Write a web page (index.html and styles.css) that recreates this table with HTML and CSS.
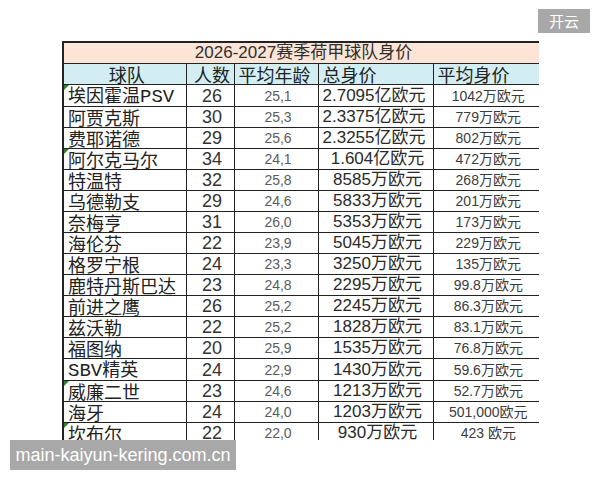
FILE: index.html
```html
<!DOCTYPE html>
<html lang="zh">
<head>
<meta charset="utf-8">
<link rel="stylesheet" href="styles.css">
</head>
<body>
<div class="page">
  <div class="badge">开云</div>
  <div class="sheet">
    <table class="grid">
      <colgroup>
        <col class="c-team"><col class="c-num"><col class="c-age"><col class="c-total"><col class="c-avg">
      </colgroup>
      <tr class="title-row"><td colspan="5">2026-2027赛季荷甲球队身价</td></tr>
      <tr class="head-row">
        <td class="center">球队</td><td class="center">人数</td><td class="left">平均年龄</td><td class="left">总身价</td><td class="left">平均身价</td>
      </tr>
      <tr><td class="team mark">埃因霍温<span class="lat">PSV</span></td><td class="num">26</td><td class="age">25,1</td><td class="total left">2.7095亿欧元</td><td class="avg">1042万欧元</td></tr>
      <tr><td class="team">阿贾克斯</td><td class="num">30</td><td class="age">25,3</td><td class="total left">2.3375亿欧元</td><td class="avg">779万欧元</td></tr>
      <tr><td class="team">费耶诺德</td><td class="num">29</td><td class="age">25,6</td><td class="total left">2.3255亿欧元</td><td class="avg">802万欧元</td></tr>
      <tr><td class="team mark">阿尔克马尔</td><td class="num">34</td><td class="age">24,1</td><td class="total">1.604亿欧元</td><td class="avg">472万欧元</td></tr>
      <tr><td class="team">特温特</td><td class="num">32</td><td class="age">25,8</td><td class="total">8585万欧元</td><td class="avg">268万欧元</td></tr>
      <tr><td class="team">乌德勒支</td><td class="num">29</td><td class="age">24,6</td><td class="total">5833万欧元</td><td class="avg">201万欧元</td></tr>
      <tr><td class="team">奈梅亨</td><td class="num">31</td><td class="age">26,0</td><td class="total">5353万欧元</td><td class="avg">173万欧元</td></tr>
      <tr><td class="team">海伦芬</td><td class="num">22</td><td class="age">23,9</td><td class="total">5045万欧元</td><td class="avg">229万欧元</td></tr>
      <tr><td class="team">格罗宁根</td><td class="num">24</td><td class="age">23,3</td><td class="total">3250万欧元</td><td class="avg">135万欧元</td></tr>
      <tr><td class="team">鹿特丹斯巴达</td><td class="num">23</td><td class="age">24,8</td><td class="total">2295万欧元</td><td class="avg">99.8万欧元</td></tr>
      <tr><td class="team">前进之鹰</td><td class="num">26</td><td class="age">25,2</td><td class="total">2245万欧元</td><td class="avg">86.3万欧元</td></tr>
      <tr><td class="team">兹沃勒</td><td class="num">22</td><td class="age">25,2</td><td class="total">1828万欧元</td><td class="avg">83.1万欧元</td></tr>
      <tr><td class="team">福图纳</td><td class="num">20</td><td class="age">25,9</td><td class="total">1535万欧元</td><td class="avg">76.8万欧元</td></tr>
      <tr><td class="team"><span class="lat">SBV</span>精英</td><td class="num">24</td><td class="age">22,9</td><td class="total">1430万欧元</td><td class="avg">59.6万欧元</td></tr>
      <tr><td class="team mark">威廉二世</td><td class="num">23</td><td class="age">24,6</td><td class="total">1213万欧元</td><td class="avg">52.7万欧元</td></tr>
      <tr><td class="team">海牙</td><td class="num">24</td><td class="age">24,0</td><td class="total">1203万欧元</td><td class="avg">501,000欧元</td></tr>
      <tr><td class="team mark">坎布尔</td><td class="num">22</td><td class="age">22,0</td><td class="total">930万欧元</td><td class="avg">423 欧元</td></tr>
    </table>
  </div>
  <div class="watermark">main-kaiyun-kering.com.cn</div>
</div>
</body>
</html>
```

FILE: styles.css
```css
html, body {
  margin: 0;
  padding: 0;
  background: #ffffff;
}

.page {
  position: relative;
  width: 600px;
  height: 480px;
  overflow: hidden;
  font-family: "Liberation Sans", "Noto Sans CJK SC", sans-serif;
}

.badge {
  position: absolute;
  top: 9px;
  left: 538px;
  width: 52px;
  height: 24px;
  background: #a8a8a8;
  color: #ffffff;
  font-family: "Noto Sans CJK SC", sans-serif;
  font-size: 15px;
  line-height: 24px;
  text-align: center;
}

.sheet {
  margin: 41px 0 0 62px;
  width: 477px;
  height: 399px;
  overflow: hidden;
}

.grid {
  border-collapse: collapse;
  table-layout: fixed;
  width: 477px;
  color: #222222;
}

.c-team { width: 123px; }
.c-num { width: 48px; }
.c-age { width: 84px; }
.c-total { width: 115px; }
.c-avg { width: 107px; }

.grid td {
  border: 1px solid #222222;
  padding: 0 0 0 4px;
  height: 20px;
  line-height: 18px;
  vertical-align: middle;
  white-space: nowrap;
  background: #ffffff;
}

.grid tr:first-child td { border-top: 2px solid #222; }
.grid td:first-child { border-left: 2px solid #222; }
.grid td:last-child { border-right: 2px solid #222; }

.title-row td {
  background: #fce4d6;
  text-align: center;
  font-size: 17px;
  color: #2e2e2e;
  height: 20px;
}

.head-row td {
  background: #d2eef3;
  font-family: "Noto Sans CJK SC", sans-serif;
  font-size: 18px;
  color: #222222;
}

.center { text-align: center; }
.left { text-align: left; }

.team {
  position: relative;
  font-family: "Noto Sans CJK SC", sans-serif;
  font-size: 18px;
  text-align: left;
}

.lat {
  font-family: "Liberation Mono", monospace;
  font-size: 19px;
}

.mark::before {
  content: "";
  position: absolute;
  left: 0;
  top: 0;
  border-top: 5px solid #2e7d32;
  border-right: 5px solid transparent;
}

.num {
  text-align: center;
  font-size: 18px;
  color: #333333;
}

.age {
  text-align: center;
  font-size: 14px;
  color: #5c5c5c;
}

.total {
  text-align: center;
  font-size: 17px;
  color: #2a2a2a;
}

.total.left {
  text-align: left;
}

.avg {
  text-align: center;
  font-size: 14px;
  color: #3c3c3c;
}

.watermark {
  display: inline-block;
  margin-left: 10px;
  width: 226px;
  height: 30px;
  background: #a8a8a8;
  color: #ffffff;
  font-size: 18px;
  line-height: 30px;
  text-align: center;
  vertical-align: top;
}
```
